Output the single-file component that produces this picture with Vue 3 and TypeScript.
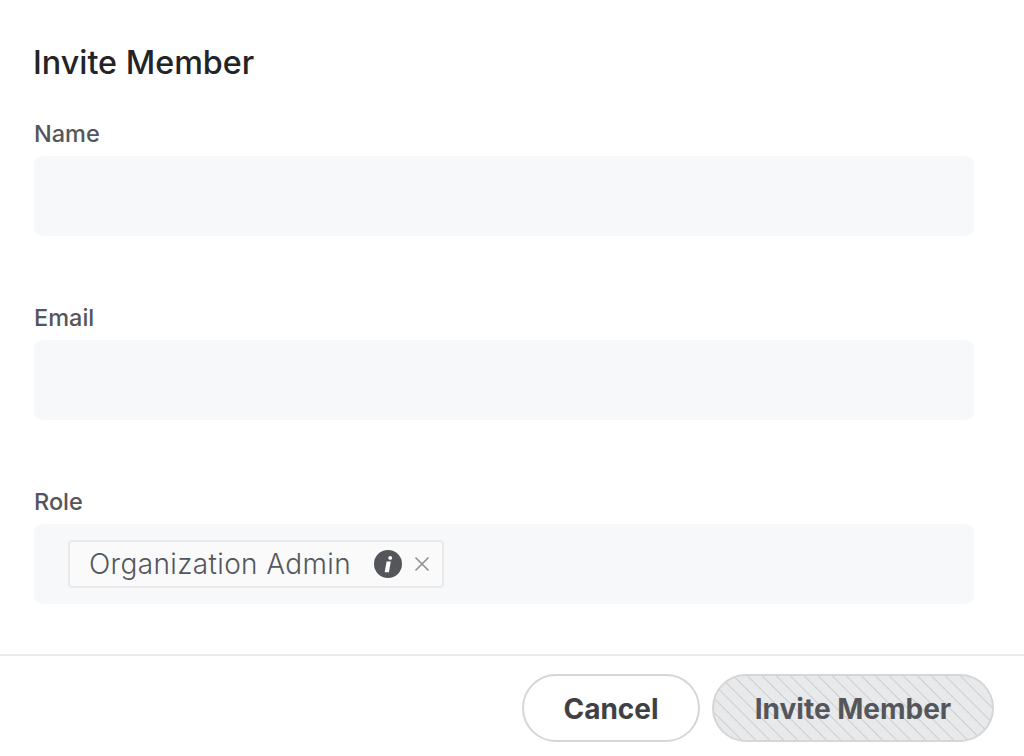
<script setup lang="ts">
const fields: string[] = ['Name', 'Email']
</script>

<template>
  <div class="modal">
    <div class="body">
      <h1 class="title">Invite Member</h1>
      <div v-for="f in fields" :key="f" class="field">
        <label class="label">{{ f }}</label>
        <div class="input"></div>
      </div>
      <div class="field last">
        <label class="label">Role</label>
        <div class="input role">
          <div class="chip">
            <span class="chip-text">Organization Admin</span>
            <svg class="info" width="28" height="28" viewBox="0 0 28 28">
              <circle cx="14" cy="14" r="14" fill="#54565b" />
              <path d="M16.2 6a1.9 1.9 0 1 1 0 3.8a1.9 1.9 0 0 1 0-3.8zM12.6 11.6h4.2l-1.9 10.6h-4.2z" fill="#fff" />
            </svg>
            <svg class="close" width="16" height="16" viewBox="0 0 16 16">
              <path d="M1.5 1.5L14.5 14.5M14.5 1.5L1.5 14.5" stroke="#8f9195" stroke-width="1.6" fill="none" />
            </svg>
          </div>
        </div>
      </div>
    </div>
    <div class="footer">
      <button class="btn cancel" type="button">Cancel</button>
      <button class="btn submit" type="button">Invite Member</button>
    </div>
  </div>
</template>

<style>
html, body { margin: 0; background: #fff; }
</style>

<style scoped>
.modal {
  width: 1024px;
  height: 756px;
  display: flex;
  flex-direction: column;
  box-sizing: border-box;
  font-family: Inter, "Liberation Sans", sans-serif;
  background: #fff;
  overflow: hidden;
}
.body {
  flex: 1;
  padding: 41px 50px 0 34px;
  box-sizing: border-box;
}
.title {
  margin: 0 0 32px -1px;
  font-size: 32.3px;
  line-height: 44px;
  font-weight: 500;
  color: #232426;
}
.field {
  margin-bottom: 65px;
}
.last {
  margin-bottom: 0;
}
.label {
  display: block;
  font-size: 23.5px;
  line-height: 34px;
  font-weight: 500;
  color: #54565b;
  margin-bottom: 5px;
}
.input {
  height: 80px;
  border-radius: 8px;
  background: #f7f8f9;
}
.role {
  display: flex;
  align-items: center;
  padding-left: 34px;
}
.chip {
  display: flex;
  align-items: center;
  box-sizing: border-box;
  width: 376px;
  height: 48px;
  padding-left: 19px;
  background: #fafafb;
  border: 2px solid #e8e9ea;
  border-radius: 4px;
}
.chip-text {
  font-size: 28px;
  font-weight: 300;
  color: #54565b;
  white-space: nowrap;
  letter-spacing: 0.36px;
}
.info {
  margin-left: auto;
  flex: none;
}
.close {
  margin: 0 12px 0 12px;
  flex: none;
}
.footer {
  height: 102px;
  box-sizing: border-box;
  border-top: 2px solid #e8e9ea;
  display: flex;
  justify-content: flex-end;
  align-items: flex-start;
  gap: 12px;
  padding: 18px 30px 0 0;
}
.btn {
  height: 68px;
  border-radius: 34px;
  font-family: inherit;
  font-size: 28px;
  font-weight: 700;
  box-sizing: border-box;
  border: 2px solid #d5d6d7;
  padding: 2px 0 0;
}
.cancel {
  width: 178px;
  background: #fff;
  color: #3f4145;
}
.submit {
  width: 282px;
  color: #54565b;
  background: repeating-linear-gradient(45deg, #e8e9ea 0, #e8e9ea 8.5px, #d5d6d7 8.5px, #d5d6d7 10px);
}
</style>
